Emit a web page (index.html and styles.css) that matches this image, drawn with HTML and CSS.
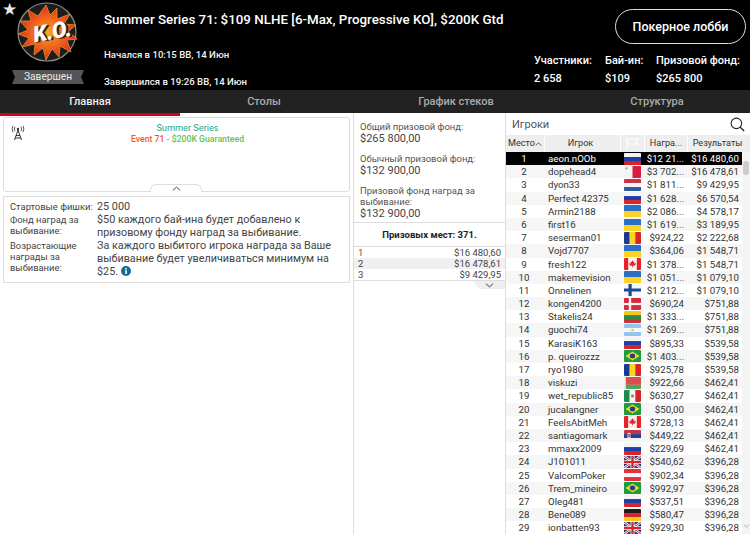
FILE: index.html
```html
<!DOCTYPE html>
<html lang="ru">
<head>
<meta charset="utf-8">
<title>Summer Series 71</title>
<link rel="stylesheet" href="styles.css">
</head>
<body>
<svg class="defs" width="0" height="0" aria-hidden="true">
<defs><radialGradient id="burst"><stop offset="0" stop-color="#f9a51e"/><stop offset=".55" stop-color="#f0641e"/><stop offset="1" stop-color="#dc2c1c"/></radialGradient></defs>
<symbol id="ru" viewBox="0 0 17 13" preserveAspectRatio="none"><rect width="17" height="4.4" fill="#f4f4f4"/><rect y="4.4" width="17" height="4.3" fill="#1f3fa8"/><rect y="8.7" width="17" height="4.3" fill="#d8232a"/></symbol>
<symbol id="mt" viewBox="0 0 17 13" preserveAspectRatio="none"><rect width="8.5" height="13" fill="#f4f4f4"/><rect x="8.5" width="8.5" height="13" fill="#d81e3a"/><rect x="1.5" y="1.5" width="2" height="2" fill="#999"/></symbol>
<symbol id="nl" viewBox="0 0 17 13" preserveAspectRatio="none"><rect width="17" height="4.4" fill="#c8324a"/><rect y="4.4" width="17" height="4.3" fill="#f4f4f4"/><rect y="8.7" width="17" height="4.3" fill="#2f5aa0"/></symbol>
<symbol id="ua" viewBox="0 0 17 13" preserveAspectRatio="none"><rect width="17" height="6.5" fill="#2a6fc4"/><rect y="6.5" width="17" height="6.5" fill="#f9d423"/></symbol>
<symbol id="ro" viewBox="0 0 17 13" preserveAspectRatio="none"><rect width="5.7" height="13" fill="#1a3a8f"/><rect x="5.7" width="5.6" height="13" fill="#f9d423"/><rect x="11.3" width="5.7" height="13" fill="#d8232a"/></symbol>
<symbol id="ca" viewBox="0 0 17 13" preserveAspectRatio="none"><rect width="17" height="13" fill="#f4f4f4"/><rect width="4.2" height="13" fill="#ea2027"/><rect x="12.8" width="4.2" height="13" fill="#ea2027"/><path d="M8.5 2.5l1 1.8 1-.4-.4 2.4 1.4-.8.4 1-1 1.6-2 .2V10h-.8V8.3l-2-.2-1-1.6.4-1 1.4.8-.4-2.4 1 .4z" fill="#ea2027"/></symbol>
<symbol id="fi" viewBox="0 0 17 13" preserveAspectRatio="none"><rect width="17" height="13" fill="#f6f6f6"/><rect x="4.5" width="3.2" height="13" fill="#1a4a9a"/><rect y="4.9" width="17" height="3.2" fill="#1a4a9a"/></symbol>
<symbol id="dk" viewBox="0 0 17 13" preserveAspectRatio="none"><rect width="17" height="13" fill="#d8283f"/><rect x="4.8" width="2.4" height="13" fill="#f6f6f6"/><rect y="5.3" width="17" height="2.4" fill="#f6f6f6"/></symbol>
<symbol id="lt" viewBox="0 0 17 13" preserveAspectRatio="none"><rect width="17" height="4.4" fill="#f2c81e"/><rect y="4.4" width="17" height="4.3" fill="#2f8a4a"/><rect y="8.7" width="17" height="4.3" fill="#c9333a"/></symbol>
<symbol id="ar" viewBox="0 0 17 13" preserveAspectRatio="none"><rect width="17" height="13" fill="#8fc6ee"/><rect y="4.3" width="17" height="4.4" fill="#f6f6f6"/><circle cx="8.5" cy="6.5" r="1.3" fill="#f2c81e"/></symbol>
<symbol id="br" viewBox="0 0 17 13" preserveAspectRatio="none"><rect width="17" height="13" fill="#1e9a3f"/><path d="M8.5 1.5L15.5 6.5 8.5 11.5 1.5 6.5z" fill="#f6d81e"/><circle cx="8.5" cy="6.5" r="2.7" fill="#1f3f8f"/></symbol>
<symbol id="by" viewBox="0 0 17 13" preserveAspectRatio="none"><rect width="17" height="8.5" fill="#d8504e"/><rect y="8.5" width="17" height="4.5" fill="#4aa85a"/><rect width="1.8" height="13" fill="#eee"/></symbol>
<symbol id="mx" viewBox="0 0 17 13" preserveAspectRatio="none"><rect width="5.7" height="13" fill="#1e8a4f"/><rect x="5.7" width="5.6" height="13" fill="#f4f4f4"/><rect x="11.3" width="5.7" height="13" fill="#d8232a"/><circle cx="8.5" cy="6.5" r="1.5" fill="#9a7a3a"/></symbol>
<symbol id="rs" viewBox="0 0 17 13" preserveAspectRatio="none"><rect width="17" height="4.4" fill="#c8324a"/><rect y="4.4" width="17" height="4.3" fill="#24438f"/><rect y="8.7" width="17" height="4.3" fill="#f4f4f4"/><rect x="3.5" y="3" width="3" height="6" rx="1" fill="#e8e0d0"/><rect x="4.2" y="4.5" width="1.6" height="3" fill="#c8324a"/></symbol>
<symbol id="gb" viewBox="0 0 17 13" preserveAspectRatio="none"><rect width="17" height="13" fill="#24367f"/><path d="M0 0L17 13M17 0L0 13" stroke="#f4f4f4" stroke-width="2.6"/><path d="M0 0L17 13M17 0L0 13" stroke="#d8232a" stroke-width="1"/><path d="M8.5 0V13M0 6.5H17" stroke="#f4f4f4" stroke-width="4"/><path d="M8.5 0V13M0 6.5H17" stroke="#d8232a" stroke-width="2.4"/></symbol>
<symbol id="at" viewBox="0 0 17 13" preserveAspectRatio="none"><rect width="17" height="13" fill="#e0343f"/><rect y="4.4" width="17" height="4.3" fill="#f6f6f6"/></symbol>
<symbol id="de" viewBox="0 0 17 13" preserveAspectRatio="none"><rect width="17" height="4.4" fill="#1c1c1c"/><rect y="4.4" width="17" height="4.3" fill="#d8232a"/><rect y="8.7" width="17" height="4.3" fill="#f9c81e"/></symbol>
<symbol id="fl" viewBox="0 0 15 11"><path d="M2 .5V10.5M2 1h11l-2 2.5 2 2.5H2" fill="none" stroke="#fff" stroke-width="1.2"/></symbol>
</svg>

<header class="top">
  <div class="fav">★</div>
  <div class="logo">
    <svg class="logo-art" viewBox="0 0 60 60" width="60" height="60" aria-hidden="true">
      <circle cx="30" cy="30" r="29" fill="#1d1d1d" stroke="#8d8d8d" stroke-width="1.2"/>
      <path d="M29 3l4 10 7-7 0 11 13-5-6 10 12 1-8 7 10 7-11 1 4 12-11-6-1 11-7-8-6 11-3-12-9 7 1-11-13 3 7-9-11-4 10-4-8-9 11 0-3-11 10 6z" fill="url(#burst)" stroke="#f5a020" stroke-width=".7"/>
    </svg>
    <span class="ko">K.O.</span>
    <div class="ribbon">Завершен</div>
  </div>
  <div class="info">
    <h1 class="title">Summer Series 71: $109 NLHE [6-Max, Progressive KO], $200K Gtd</h1>
    <p class="time first">Начался в 10:15 ВВ, 14 Июн</p>
    <p class="time">Завершился в 19:26 ВВ, 14 Июн</p>
  </div>
  <div class="side">
    <button class="lobby">Покерное лобби</button>
    <div class="stats">
      <div class="stat s1"><span>Участники:</span><span>2 658</span></div>
      <div class="stat s2"><span>Бай-ин:</span><span>$109</span></div>
      <div class="stat"><span>Призовой фонд:</span><span>$265 800</span></div>
    </div>
  </div>
</header>

<nav class="tabs">
  <div class="tab active">Главная</div>
  <div class="tab">Столы</div>
  <div class="tab">График стеков</div>
  <div class="tab">Структура</div>
</nav>

<main class="content">
  <section class="left">
    <div class="news">
      <svg class="antenna" viewBox="0 0 16 16" width="16" height="16" aria-hidden="true">
        <path d="M8 5L4.5 15M8 5l3.5 10M6 10.5h4M5 13h6" fill="none" stroke="#333" stroke-width="1"/>
        <circle cx="8" cy="4" r="1.2" fill="#333"/>
        <path d="M5 1.8a4 4 0 0 0 0 4.4M11 1.8a4 4 0 0 1 0 4.4M3 .8a6.5 6.5 0 0 0 0 6.4M13 .8a6.5 6.5 0 0 1 0 6.4" fill="none" stroke="#333" stroke-width=".8"/>
      </svg>
      <div class="news-a">Summer Series</div>
      <div class="news-b"><span class="orange">Event 71</span> <span class="dash">-</span> <span class="green">$200K Guaranteed</span></div>
      <div class="handle"><svg viewBox="0 0 10 5" width="9" height="5" aria-hidden="true"><path d="M1 4.5L5 1l4 3.5" fill="none" stroke="#333" stroke-width="1"/></svg></div>
    </div>
    <dl class="facts">
      <dt>Стартовые фишки:</dt><dd>25 000</dd>
      <dt>Фонд наград за выбивание:</dt><dd>$50 каждого бай-ина будет добавлено к призовому фонду наград за выбивание.</dd>
      <dt>Возрастающие награды за выбивание:</dt><dd>За каждого выбитого игрока награда за Ваше выбивание будет увеличиваться минимум на $25. <svg class="i" viewBox="0 0 10 10" width="10" height="10" aria-hidden="true"><circle cx="5" cy="5" r="5" fill="#156d96"/><rect x="4.2" y="4.2" width="1.6" height="3.8" fill="#fff"/><rect x="4.2" y="2" width="1.6" height="1.5" fill="#fff"/></svg></dd>
    </dl>
  </section>

  <section class="mid">
    <div class="pools">
      <div class="pool"><span>Общий призовой фонд:</span><b>$265 800,00</b></div>
      <div class="pool"><span>Обычный призовой фонд:</span><b>$132 900,00</b></div>
      <div class="pool"><span>Призовой фонд наград за выбивание:</span><b>$132 900,00</b></div>
    </div>
    <div class="places">Призовых мест: 371.</div>
    <div class="pays">
      <div class="pay"><span class="pn red">1</span><span>$16 480,60</span></div>
      <div class="pay alt"><span class="pn">2</span><span>$16 478,61</span></div>
      <div class="pay"><span class="pn">3</span><span>$9 429,95</span></div>
    </div>
    <div class="more"><svg viewBox="0 0 10 5" width="9" height="5" aria-hidden="true"><path d="M1 .5L5 4l4-3.5" fill="none" stroke="#333" stroke-width="1"/></svg></div>
  </section>

  <section class="right">
    <div class="search">
      <span>Игроки</span>
      <svg viewBox="0 0 16 16" width="15" height="15" aria-hidden="true"><circle cx="6.8" cy="6.8" r="5.6" fill="none" stroke="#222" stroke-width="1.1"/><path d="M10.8 10.8L15 15" stroke="#222" stroke-width="1.5"/></svg>
    </div>
    <div class="thead">
      <div class="th">Место<svg viewBox="0 0 8 5" width="7" height="4" aria-hidden="true"><path d="M.5 4.5L4 1l3.5 3.5" fill="none" stroke="#333" stroke-width="1"/></svg></div>
      <div class="th pr4">Игрок</div>
      <div class="th"><svg class="thf" width="15" height="11" aria-hidden="true"><use href="#fl"/></svg></div>
      <div class="th">Награ...</div>
      <div class="th pr3">Результаты</div>
    </div>
    <div class="body-wrap">
      <div class="rows">
        <div class="row sel"><span>1</span><span>aeon.nOOb</span><svg class="flag"><use href="#ru"/></svg><span>$12 21...</span><span>$16 480,60</span></div>
        <div class="row"><span>2</span><span>dopehead4</span><svg class="flag"><use href="#mt"/></svg><span>$3 702...</span><span>$16 478,61</span></div>
        <div class="row"><span>3</span><span>dyon33</span><svg class="flag"><use href="#nl"/></svg><span>$1 811...</span><span>$9 429,95</span></div>
        <div class="row"><span>4</span><span>Perfect 42375</span><svg class="flag"><use href="#ru"/></svg><span>$1 628...</span><span>$6 570,54</span></div>
        <div class="row"><span>5</span><span>Armin2188</span><svg class="flag"><use href="#ua"/></svg><span>$2 086...</span><span>$4 578,17</span></div>
        <div class="row"><span>6</span><span>first16</span><svg class="flag"><use href="#ua"/></svg><span>$1 619...</span><span>$3 189,95</span></div>
        <div class="row"><span>7</span><span>seserman01</span><svg class="flag"><use href="#ro"/></svg><span>$924,22</span><span>$2 222,68</span></div>
        <div class="row"><span>8</span><span>Vojd7707</span><svg class="flag"><use href="#ua"/></svg><span>$364,06</span><span>$1 548,71</span></div>
        <div class="row"><span>9</span><span>fresh122</span><svg class="flag"><use href="#ca"/></svg><span>$1 378...</span><span>$1 548,71</span></div>
        <div class="row"><span>10</span><span>makemevision</span><svg class="flag"><use href="#ua"/></svg><span>$1 051...</span><span>$1 079,10</span></div>
        <div class="row"><span>11</span><span>Onnelinen</span><svg class="flag"><use href="#fi"/></svg><span>$1 212...</span><span>$1 079,10</span></div>
        <div class="row"><span>12</span><span>kongen4200</span><svg class="flag"><use href="#dk"/></svg><span>$690,24</span><span>$751,88</span></div>
        <div class="row"><span>13</span><span>Stakelis24</span><svg class="flag"><use href="#lt"/></svg><span>$1 333...</span><span>$751,88</span></div>
        <div class="row"><span>14</span><span>guochi74</span><svg class="flag"><use href="#ar"/></svg><span>$1 269...</span><span>$751,88</span></div>
        <div class="row"><span>15</span><span>KarasiK163</span><svg class="flag"><use href="#ru"/></svg><span>$895,33</span><span>$539,58</span></div>
        <div class="row"><span>16</span><span>p. queirozzz</span><svg class="flag"><use href="#br"/></svg><span>$1 403...</span><span>$539,58</span></div>
        <div class="row"><span>17</span><span>ryo1980</span><svg class="flag"><use href="#ro"/></svg><span>$925,78</span><span>$539,58</span></div>
        <div class="row"><span>18</span><span>viskuzi</span><svg class="flag"><use href="#by"/></svg><span>$922,66</span><span>$462,41</span></div>
        <div class="row"><span>19</span><span>wet_republic85</span><svg class="flag"><use href="#mx"/></svg><span>$630,27</span><span>$462,41</span></div>
        <div class="row"><span>20</span><span>jucalangner</span><svg class="flag"><use href="#br"/></svg><span>$50,00</span><span>$462,41</span></div>
        <div class="row"><span>21</span><span>FeelsAbitMeh</span><svg class="flag"><use href="#ca"/></svg><span>$728,13</span><span>$462,41</span></div>
        <div class="row"><span>22</span><span>santiagomark</span><svg class="flag"><use href="#rs"/></svg><span>$449,22</span><span>$462,41</span></div>
        <div class="row"><span>23</span><span>mmaxx2009</span><svg class="flag"><use href="#ru"/></svg><span>$229,69</span><span>$462,41</span></div>
        <div class="row"><span>24</span><span>J101011</span><svg class="flag"><use href="#gb"/></svg><span>$540,62</span><span>$396,28</span></div>
        <div class="row"><span>25</span><span>ValcomPoker</span><svg class="flag"><use href="#at"/></svg><span>$902,34</span><span>$396,28</span></div>
        <div class="row"><span>26</span><span>Trem_mineiro</span><svg class="flag"><use href="#br"/></svg><span>$992,97</span><span>$396,28</span></div>
        <div class="row"><span>27</span><span>Oleg481</span><svg class="flag"><use href="#ru"/></svg><span>$537,51</span><span>$396,28</span></div>
        <div class="row"><span>28</span><span>Bene089</span><svg class="flag"><use href="#de"/></svg><span>$580,47</span><span>$396,28</span></div>
        <div class="row"><span>29</span><span>ionbatten93</span><svg class="flag"><use href="#gb"/></svg><span>$929,30</span><span>$396,28</span></div>
      </div>
      <div class="scroll"><div class="thumb"></div><svg class="down" viewBox="0 0 8 5" width="7" height="4" aria-hidden="true"><path d="M.5 .5L4 4l3.5-3.5" fill="none" stroke="#999" stroke-width="1"/></svg></div>
    </div>
  </section>
</main>
</body>
</html>
```

FILE: styles.css
```css
* { box-sizing: border-box; }
html, body { margin: 0; padding: 0; height: 534px; overflow: hidden; background: #fff; }
body { font-family: Roboto, "Liberation Sans", sans-serif; color: #333; display: flex; flex-direction: column; width: 750px; }
.defs { position: absolute; }

.top { height: 90px; background: #000; color: #fff; display: flex; position: relative; flex: none; }
.fav { position: absolute; left: 2px; top: -1px; font-size: 17px; line-height: 20px; color: #e8e8e8; }
.logo { width: 104px; flex: none; position: relative; }
.logo-art { position: absolute; left: 17px; top: 2px; }
.ko { position: absolute; left: 33px; top: 20px; font: italic 900 22px/24px Roboto, sans-serif; color: #fff; transform: rotate(-10deg); text-shadow: 2px 1px 0 #222; letter-spacing: -.5px; }
.ribbon { position: absolute; left: 12px; top: 70px; width: 72px; height: 14px; background: #555; color: #e8e8e8; font-size: 10.2px; line-height: 14px; text-align: center; clip-path: polygon(0 0, 100% 0, 96% 50%, 100% 100%, 0 100%, 4% 50%); }
.info { flex: 1; min-width: 0; }
.title { margin: 12px 0 0; font-size: 13.35px; line-height: 16px; font-weight: 500; white-space: nowrap; }
.time { margin: 0; font-size: 9.6px; line-height: 13px; font-weight: 500; color: #f2f2f2; }
.time.first { margin-top: 20px; margin-bottom: 14px; }
.side { width: 216px; flex: none; display: flex; flex-direction: column; }
.lobby { align-self: flex-end; width: 131px; height: 35px; margin: 9px 4px 0 0; background: #000; border: 1px solid #ddd; border-radius: 18px; color: #fff; font: 500 12.5px/16px Roboto, sans-serif; padding: 0; }
.stats { display: flex; margin-top: 10px; font-size: 11px; font-weight: 500; }
.stat { display: flex; flex-direction: column; gap: 4px; line-height: 14px; white-space: nowrap; }
.s1 { width: 71px; }
.s2 { width: 51px; }

.tabs { height: 23px; background: #222; display: grid; grid-template-columns: 180px 168px 216px 186px; flex: none; }
.tab { color: #aaa; font-size: 11px; font-weight: 500; text-align: center; line-height: 23px; }
.tab.active { color: #eee; border-bottom: 3px solid #d0021b; }

.content { flex: 1; display: flex; min-height: 0; }
.left { width: 354px; flex: none; border-right: 1px solid #ddd; padding: 4px 3px 0; }
.news { height: 75px; border: 1px solid #ddd; border-radius: 3px; position: relative; text-align: center; padding-left: 22px; }
.antenna { position: absolute; left: 6px; top: 7px; }
.news-a { font-size: 9.2px; line-height: 11px; color: #1fa58f; margin-top: 4px; }
.news-b { font-size: 8.7px; line-height: 11px; font-weight: 500; margin-top: 1px; }
.orange { color: #ef5a28; }
.dash { color: #999; }
.green { color: #6cc04a; }
.handle { position: absolute; left: 146px; bottom: -1px; width: 52px; height: 8px; background: #fff; border: 1px solid #ddd; border-bottom: 0; border-radius: 6px 6px 0 0; display: flex; justify-content: center; padding-top: 1px; }
.facts { margin: 4px 0 0; border: 1px solid #ddd; padding: 3px 0 0 6px; display: grid; grid-template-columns: 87px 1fr; height: 87px; align-content: start; }
.facts dt { font-size: 9.4px; line-height: 11px; color: #444; padding: 1px 2px 0 0; }
.facts dd { margin: 0; padding-right: 3px; font-size: 10.8px; line-height: 13px; color: #444; }
.i { display: inline-block; vertical-align: -1px; }

.mid { width: 151px; flex: none; display: flex; flex-direction: column; }
.pools { padding: 8px 6px 0; height: 110px; border-bottom: 1px solid #ddd; }
.pool { margin-bottom: 8px; }
.pool span { display: block; font-size: 9.45px; line-height: 11px; color: #555; }
.pool b { display: block; font-weight: 400; font-size: 11px; line-height: 13px; color: #444; }
.places { height: 24px; font-size: 9.5px; font-weight: 700; line-height: 24px; text-align: center; color: #222; border-bottom: 1px solid #ddd; }
.pays { border-bottom: 1px solid #ddd; }
.pay { height: 11px; display: flex; justify-content: space-between; padding: 0 4px; font-size: 9.5px; line-height: 11px; color: #444; }
.pay.alt { background: #f0f0f0; }
.pn.red { color: #a33; }
.more { align-self: flex-end; width: 32px; height: 8px; background: #eee; clip-path: polygon(0 0, 100% 0, 100% 100%, 20% 100%); display: flex; justify-content: center; align-items: center; }

.right { flex: 1; min-width: 0; border-left: 1px solid #ddd; display: flex; flex-direction: column; }
.search { height: 22px; flex: none; display: flex; align-items: center; justify-content: space-between; padding: 0 5px 0 6px; font-size: 11px; color: #555; }
.thead { height: 17px; flex: none; display: grid; grid-template-columns: 38px 75px 23px 42px 1fr; gap: 1px; font-size: 9.1px; color: #333; }
.th { background: #eee; display: flex; align-items: center; justify-content: center; white-space: nowrap; line-height: 17px; }
.pr4 { padding-right: 4px; }
.pr3 { padding-right: 3px; }
.body-wrap { flex: 1; min-height: 0; display: flex; overflow: hidden; }
.rows { flex: 1; min-width: 0; }
.row { height: 13.2px; display: grid; grid-template-columns: 36px 82px 17px 43px 55px; font-size: 9.7px; line-height: 13.2px; color: #333; white-space: nowrap; padding-right: 3px; }
.row:nth-child(even) { background: #f6f6f6; }
.row.sel { background: #000; color: #fff; }
.row span:nth-child(1) { text-align: center; }
.row span:nth-child(2) { padding-left: 6px; }
.row span:nth-child(4), .row span:nth-child(5) { text-align: right; }
.flag { width: 17px; height: 12px; display: block; margin-top: .6px; border-radius: 1px; }
.scroll { width: 8px; flex: none; background: #f4f4f4; padding-top: 9px; display: flex; flex-direction: column; align-items: center; justify-content: space-between; padding-bottom: 6px; }
.thumb { width: 6px; height: 14px; background: #ccc; border-radius: 3px; }
.down { flex: none; }
```
